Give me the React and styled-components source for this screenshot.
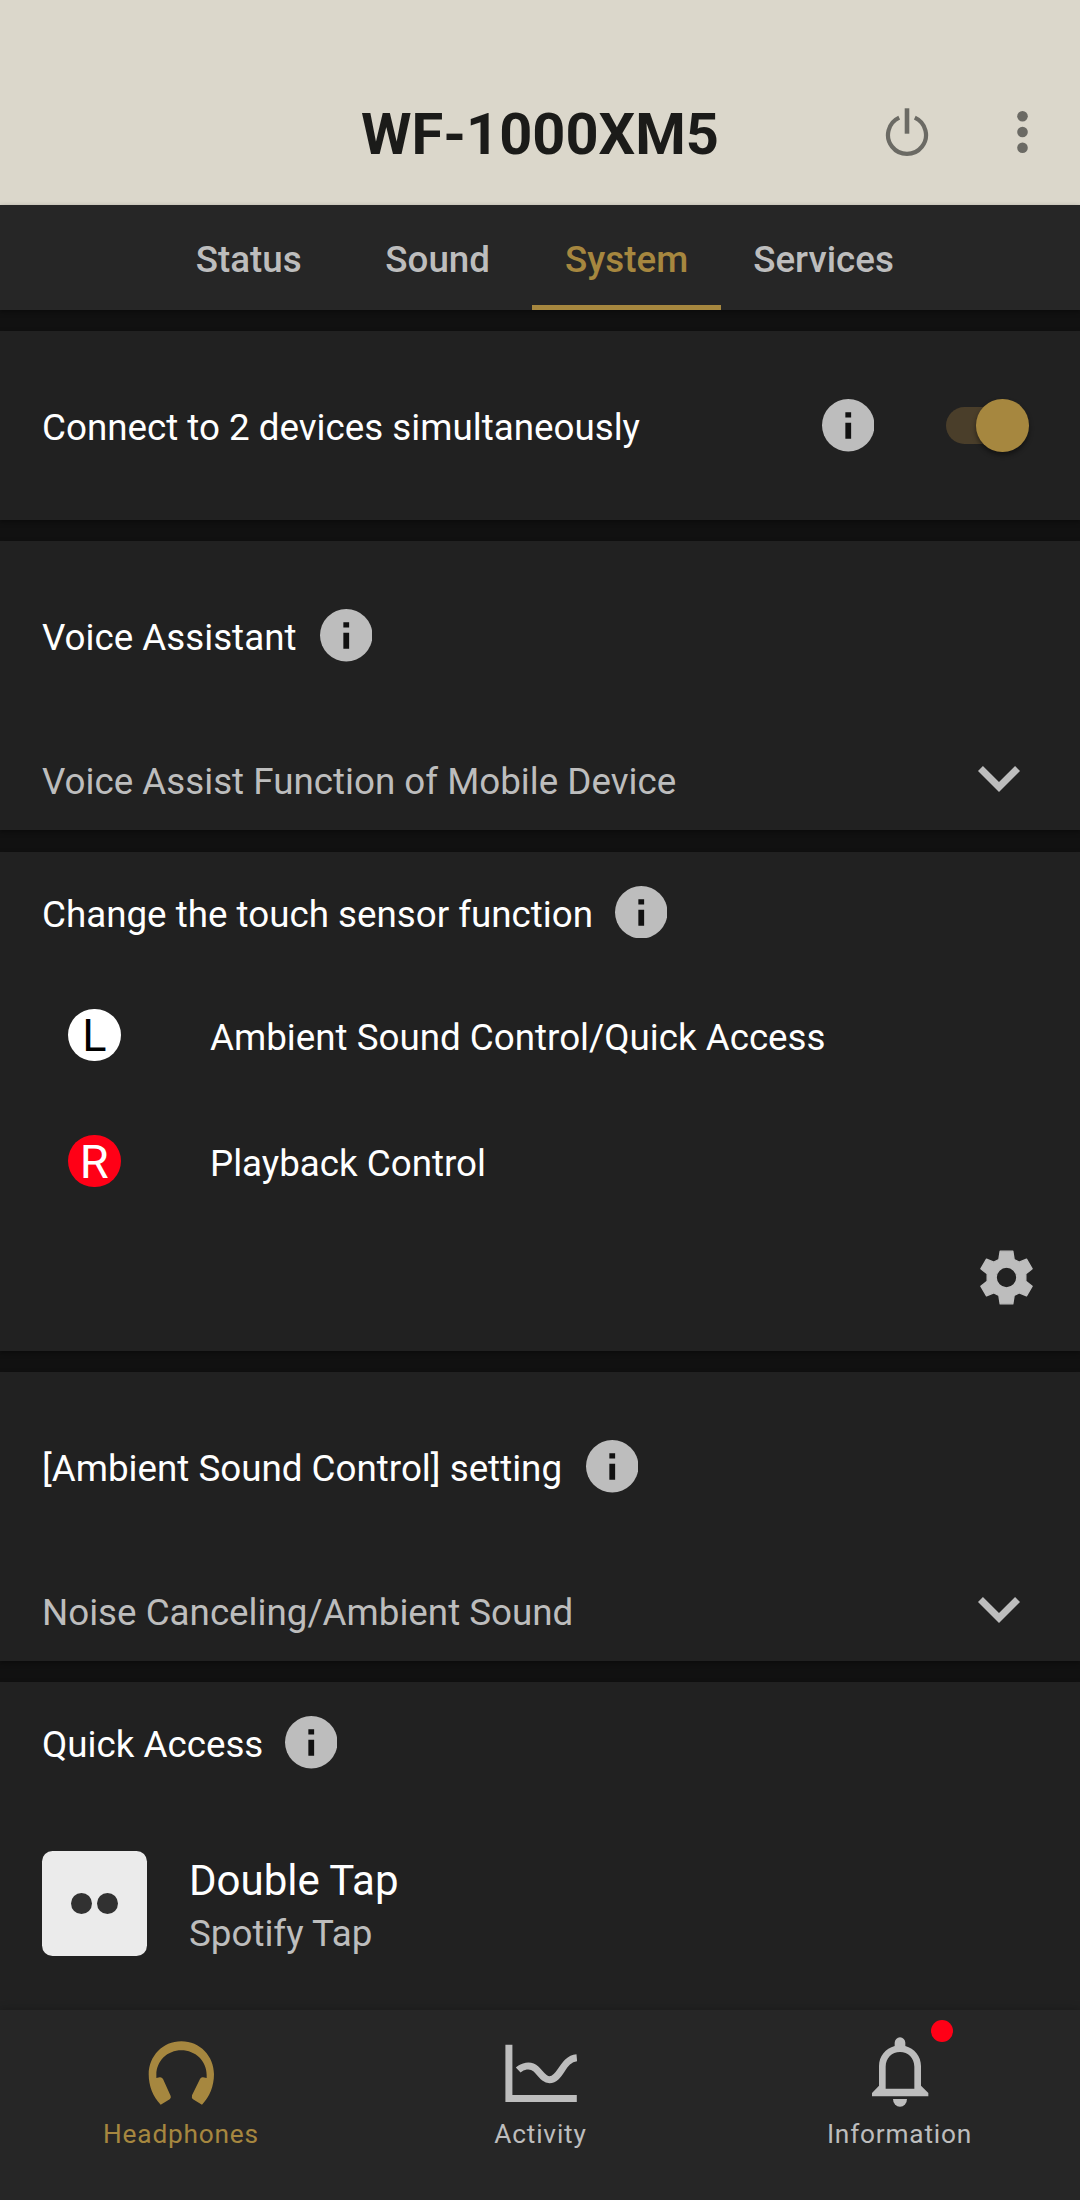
import styled, { createGlobalStyle } from "styled-components"
import { useState } from "react"

const GlobalStyle = createGlobalStyle`
    body {
        margin: 0;
        background: #111111;
        font-family: Roboto, "Liberation Sans", sans-serif;
    }
`
const Screen = styled.div`
    width: 1080px;
    height: 2200px;
    overflow: hidden;
    display: flex;
    flex-direction: column;
`
const Header = styled.header`
    height: 205px;
    flex-shrink: 0;
    box-sizing: border-box;
    padding-top: 58px;
    background: #DBD7CB;
    display: grid;
    grid-template-columns: 1fr auto 1fr;
    align-items: start;
`
const DeviceName = styled.h1`
    grid-column: 2;
    margin: 0;
    padding-top: 43px;
    color: #1B1B19;
    font-size: 57.75px;
    font-weight: 700;
    line-height: 67px;
`
const HeaderActions = styled.div`
    display: flex;
    justify-content: flex-end;
    align-items: center;
    gap: 88.5px;
    height: 147px;
    padding-right: 52px;
`
const Tabs = styled.nav`
    height: 105px;
    flex-shrink: 0;
    background: #262626;
    display: flex;
    justify-content: center;
    box-shadow: 0 2px 5px rgba(0, 0, 0, 0.4);
`
const Tab = styled.button`
    min-width: 189px;
    height: 105px;
    padding: 3px 32px 0;
    box-sizing: border-box;
    border: none;
    background: ${({ $on }) => $on ? "linear-gradient(#A6873F, #A6873F) bottom / 100% 5px no-repeat" : "none"};
    color: ${({ $on }) => $on ? "#A6873F" : "#BDBDBD"};
    font-family: inherit;
    font-size: 36.75px;
    font-weight: 500;
    line-height: 43px;
`
const Content = styled.main`
    flex: 1;
    min-height: 0;
    padding-top: 21px;
    display: flex;
    flex-direction: column;
    gap: 21px;
`
const Card = styled.section`
    height: ${({ $height }) => $height}px;
    margin-bottom: ${({ $after }) => $after || 0}px;
    flex-shrink: 0;
    box-sizing: border-box;
    background: #212121;
    box-shadow: 0 2px 5px rgba(0, 0, 0, 0.4);
`
const TitleRow = styled.div`
    height: ${({ $height }) => $height}px;
    box-sizing: border-box;
    padding: 0 50px 0 42px;
    display: flex;
    align-items: center;
    gap: ${({ $gap }) => $gap || 0}px;
`
const Label = styled.div`
    padding-top: 4px;
    margin-right: ${({ $grow }) => $grow ? "auto" : "0"};
    color: #FFFFFF;
    font-size: 36.75px;
    line-height: 43px;
    white-space: nowrap;
`
const SelectRow = styled.div`
    height: 96px;
    padding: 0 39px 0 42px;
    display: flex;
    justify-content: space-between;
    align-items: center;
`
const SelectValue = styled.div`
    padding-top: 7px;
    color: #BDBDBD;
    font-size: 36.75px;
    line-height: 43px;
`
const Switch = styled.button`
    width: 84px;
    height: 53px;
    margin-left: 72px;
    padding: 0;
    border: none;
    background: none;
    display: flex;
    align-items: center;
`
const Track = styled.span`
    width: 56px;
    height: 37px;
    border-radius: 19px 0 0 19px;
    background: #4A3E2A;
`
const Thumb = styled.span`
    width: 52.5px;
    height: 52.5px;
    flex-shrink: 0;
    margin-left: ${({ $on }) => $on ? "-26px" : "-56px"};
    border-radius: 50%;
    background: #A6873F;
    box-shadow: 0 3px 5px rgba(0, 0, 0, 0.45);
`
const SensorRow = styled.div`
    height: 126px;
    padding-left: 68px;
    display: flex;
    align-items: center;
`
const Side = styled.span`
    width: 52.5px;
    height: 52.5px;
    margin-right: 89.5px;
    border-radius: 50%;
    background: ${({ $red }) => $red ? "#FF0016" : "#FFFFFF"};
    color: ${({ $red }) => $red ? "#FFFFFF" : "#000000"};
    font-size: ${({ $red }) => $red ? "47px" : "45px"};
    line-height: 53px;
    text-align: center;
`
const SettingsRow = styled.div`
    height: 107px;
    padding-right: 46px;
    display: flex;
    justify-content: flex-end;
    align-items: center;
`
const TapRow = styled.div`
    padding: 48px 42px 0;
    display: flex;
    gap: 42px;
`
const TapTile = styled.div`
    width: 105px;
    height: 105px;
    border-radius: 10.5px;
    background: #EBEBEB;
    display: flex;
    justify-content: center;
    align-items: center;
    gap: 5px;
`
const TapDot = styled.span`
    width: 21.4px;
    height: 21.4px;
    border-radius: 50%;
    background: #313131;
`
const TapText = styled.div`
    padding-top: 5px;
    color: #BDBDBD;
    font-size: 36.75px;
    line-height: 56px;
`
const TapName = styled.div`
    color: #FFFFFF;
    font-size: 42px;
    line-height: 50px;
`
const BottomNav = styled.nav`
    height: 190px;
    flex-shrink: 0;
    position: relative;
    background: #262626;
    box-shadow: 0 -1px 8px rgba(0, 0, 0, 0.22);
    display: grid;
    grid-template-columns: 362px 357px 361px;
`
const NavItem = styled.button`
    position: relative;
    padding: 26px 0 0;
    border: none;
    background: none;
    color: ${({ $on }) => $on ? "#A6873F" : "#BDBDBD"};
    font-family: inherit;
    font-size: 26.25px;
    line-height: 31px;
    letter-spacing: 0.8px;
    display: flex;
    flex-direction: column;
    align-items: center;
`
const NavIcon = styled.span`
    height: 83px;
    display: flex;
    align-items: flex-start;
    padding-top: ${({ $top }) => $top || 0}px;
    box-sizing: border-box;
`
const Badge = styled.span`
    position: absolute;
    top: 10px;
    left: 212px;
    width: 22px;
    height: 22px;
    border-radius: 50%;
    background: #FF0016;
`
const InfoSvg = styled.svg`
    flex-shrink: 0;
`

const InfoIcon = () => (
    <InfoSvg width="52.5" height="52.5" viewBox="2 2 20 20">
        <circle cx="12" cy="12" r="10" fill="#BDBDBD" />
        <path d="M10.9 7h2.2v2h-2.2zM10.9 11h2.2v6.1h-2.2z" fill="#111111" />
    </InfoSvg>
)

const PowerIcon = () => (
    <svg width="44" height="50" viewBox="0 0 44 50" fill="none" stroke="#6B6A64" strokeWidth="4.2">
        <path d="M14.2 10.6A19 19 0 1 0 29.8 10.6" />
        <path d="M22 1.3V26.7" strokeWidth="4.6" />
    </svg>
)

const MoreIcon = () => (
    <svg width="11" height="44" viewBox="0 0 11 44" fill="#6B6A64">
        <circle cx="5.5" cy="6.25" r="5.3" />
        <circle cx="5.5" cy="22" r="5.3" />
        <circle cx="5.5" cy="37.75" r="5.3" />
    </svg>
)

const ChevronIcon = () => (
    <svg width="84" height="84" viewBox="0 0 24 24" fill="#BDBDBD">
        <path d="M16.59 8.59L12 13.17 7.41 8.59 6 10l6 6 6-6z" />
    </svg>
)

const GearIcon = () => (
    <svg width="55" height="55" viewBox="-82.5 -82.5 165 165" fill="#BDBDBD">
        <path
            fillRule="evenodd"
            stroke="#BDBDBD"
            strokeWidth="4"
            strokeLinejoin="round"
            d="M-19 -79H19L23 -54L38 -46L60 -55L77 -26L58 -11V11L77 26L60 55L38 46L23 54L19 79H-19L-23 54L-38 46L-60 55L-77 26L-58 11V-11L-77 -26L-60 -55L-38 -46L-23 -54ZM-31 0A31 31 0 1 0 31 0A31 31 0 1 0 -31 0Z"
        />
    </svg>
)

const HeadphonesIcon = () => (
    <svg width="66.7" height="64.3" viewBox="24 32 200 193" fill="#A6873F">
        <path d="M124 33C68 33 26 78 26 132C26 167 39 200 62 223L89 207Q94 203 92 197L69 146Q65 140 59 141L49 143V134C49 92 82 60 124 60S200 92 200 134V143L189 141Q183 140 180 146L156 195Q154 203 159 207L186 223C209 200 222 167 222 132C222 78 180 33 124 33Z" />
    </svg>
)

const ActivityIcon = () => (
    <svg width="72" height="59" viewBox="0 0 72 59" fill="none" stroke="#BDBDBD" strokeWidth="7">
        <path d="M3.9 .7V54.5H71.8" />
        <path d="M13.2 26C17 22.5 25 19.5 31 25C36 29.5 38.8 35.7 44.5 35.7C56 35.7 57 15 71.8 13.7" />
    </svg>
)

const BellIcon = () => (
    <svg width="60" height="72" viewBox="270 108 180 216" fill="#BDBDBD">
        <path
            fillRule="evenodd"
            d="M344 138V128a16 16 0 0 1 32 0V138C403 145 423 169 423 198V257L445 279V289H276V279L297 257V198C297 169 317 145 344 138ZM317 266H403V200C403 174 384 156 360 156S317 174 317 200Z"
        />
        <path d="M339 297H381A21 23 0 0 1 339 297Z" />
    </svg>
)

const tabs = ["Status", "Sound", "System", "Services"]

const App = () => {

    const [activeTab, setActiveTab] = useState("System")
    const [multipoint, setMultipoint] = useState(true)

    return (
        <Screen>
            <GlobalStyle />
            <Header>
                <DeviceName>WF-1000XM5</DeviceName>
                <HeaderActions>
                    <PowerIcon />
                    <MoreIcon />
                </HeaderActions>
            </Header>
            <Tabs>
                {tabs.map((tab) => (
                    <Tab key={tab} $on={tab === activeTab} onClick={() => setActiveTab(tab)}>{tab}</Tab>
                ))}
            </Tabs>
            <Content>
                <Card $height={189}>
                    <TitleRow $height={189}>
                        <Label $grow>Connect to 2 devices simultaneously</Label>
                        <InfoIcon />
                        <Switch onClick={() => setMultipoint(!multipoint)}>
                            <Track />
                            <Thumb $on={multipoint} />
                        </Switch>
                    </TitleRow>
                </Card>
                <Card $height={289} $after={1}>
                    <TitleRow $height={189} $gap={23.5}>
                        <Label>Voice Assistant</Label>
                        <InfoIcon />
                    </TitleRow>
                    <SelectRow>
                        <SelectValue>Voice Assist Function of Mobile Device</SelectValue>
                        <ChevronIcon />
                    </SelectRow>
                </Card>
                <Card $height={499}>
                    <TitleRow $height={120} $gap={21.5}>
                        <Label>Change the touch sensor function</Label>
                        <InfoIcon />
                    </TitleRow>
                    <SensorRow>
                        <Side>L</Side>
                        <Label>Ambient Sound Control/Quick Access</Label>
                    </SensorRow>
                    <SensorRow>
                        <Side $red>R</Side>
                        <Label>Playback Control</Label>
                    </SensorRow>
                    <SettingsRow>
                        <GearIcon />
                    </SettingsRow>
                </Card>
                <Card $height={289}>
                    <TitleRow $height={189} $gap={23.5}>
                        <Label>[Ambient Sound Control] setting</Label>
                        <InfoIcon />
                    </TitleRow>
                    <SelectRow>
                        <SelectValue>Noise Canceling/Ambient Sound</SelectValue>
                        <ChevronIcon />
                    </SelectRow>
                </Card>
                <Card $height={328}>
                    <TitleRow $height={121} $gap={21.5}>
                        <Label>Quick Access</Label>
                        <InfoIcon />
                    </TitleRow>
                    <TapRow>
                        <TapTile>
                            <TapDot />
                            <TapDot />
                        </TapTile>
                        <TapText>
                            <TapName>Double Tap</TapName>
                            Spotify Tap
                        </TapText>
                    </TapRow>
                </Card>
            </Content>
            <BottomNav>
                <NavItem $on>
                    <NavIcon $top={4.5}><HeadphonesIcon /></NavIcon>
                    Headphones
                </NavItem>
                <NavItem>
                    <NavIcon $top={8}><ActivityIcon /></NavIcon>
                    Activity
                </NavItem>
                <NavItem>
                    <NavIcon><BellIcon /></NavIcon>
                    Information
                    <Badge />
                </NavItem>
            </BottomNav>
        </Screen>
    )
}
export default App
